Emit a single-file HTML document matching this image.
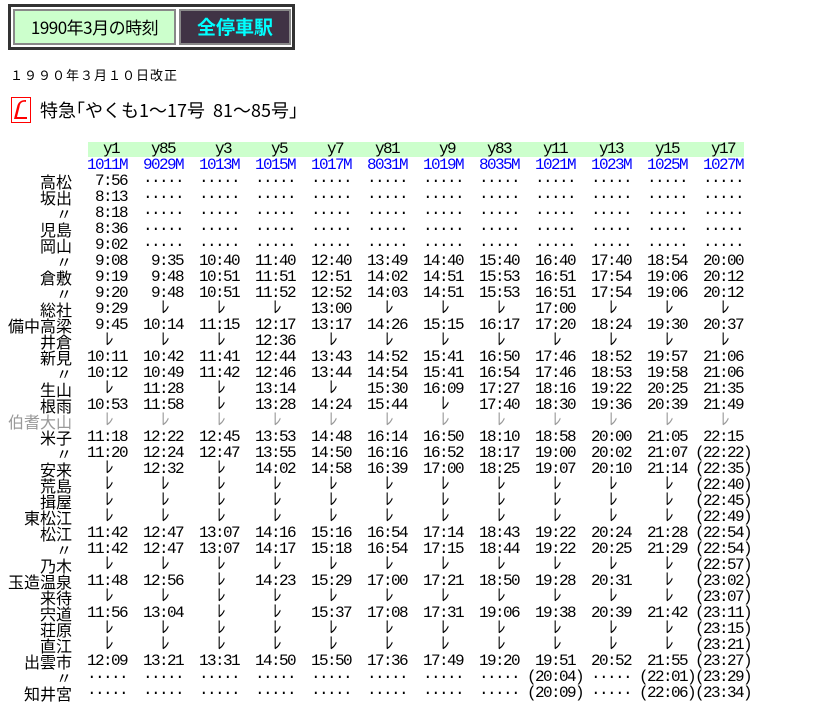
<!DOCTYPE html>
<html><head><meta charset="utf-8"><style>
body{margin:0;background:#fff;width:820px;height:707px;overflow:hidden;position:relative;font-family:"Liberation Sans","Noto Sans CJK JP",sans-serif;color:#000}
.top{position:absolute;left:8px;top:4px;width:281px;height:40px;border:3px solid #333;background:#fff}
.b1{position:absolute;left:2px;top:2px;width:159px;height:32px;background:#ccffcc;border:2px solid #888;font-size:17px;line-height:32px;text-align:center;font-family:"Noto Sans CJK JP",sans-serif;letter-spacing:-0.5px}
.b2{position:absolute;left:168px;top:2px;width:108px;height:32px;background:#403345;border:2px solid #888;font-size:19px;line-height:32px;text-align:center;color:#00ffff;font-family:"Noto Sans CJK JP",sans-serif;font-weight:bold}
.date{position:absolute;left:10px;top:65px;font-size:13px;letter-spacing:1px;font-family:"Noto Sans CJK JP",sans-serif}
.ico{position:absolute;left:11px;top:97px;width:18px;height:24px;border:1px solid #f00}
.ttl{position:absolute;left:40px;top:98px;font-size:18px;line-height:24px;font-family:"Noto Sans CJK JP",sans-serif}
.g{position:absolute;left:88px;top:142px;width:656px;height:15px;background:#ccffcc}
.t{position:absolute;left:0;top:141px;width:820px}
.r{height:16px;position:relative;display:flex;align-items:flex-start;overflow:visible}
.r u{position:absolute;right:748px;top:0;text-decoration:none;font-size:16px;font-family:"Noto Sans CJK JP",sans-serif;line-height:16px}
.r i{display:block;flex:none;width:56px;height:16px;font-style:normal;font-family:"Liberation Mono",monospace;font-size:16px;line-height:16px;letter-spacing:-1.6px;white-space:pre;overflow:visible}
.c{padding-left:87px}
.r i.k{font-family:"Noto Sans CJK JP",sans-serif;letter-spacing:0;padding-left:18px;width:38px;position:relative;top:-3px;font-size:17px}
.r i.p{margin-left:-8px;margin-right:8px}
.bl i{color:#0000ff}
.gr,.gr i{color:#999}
</style></head><body>
<div class="top"><div class="b1">1990年3月の時刻</div><div class="b2">全停車駅</div></div>
<div class="date">１９９０年３月１０日改正</div>
<div class="ico"><svg width="18" height="24" viewBox="0 0 18 24"><path d="M14 4 C9 3 8 6 7.5 9 L5 19 L15 19 L15 21 L2 21 L5 9 C6 4 9 2 14 2 Z" fill="#f00"/></svg></div>
<div class="ttl">特急｢やくも1～17号&nbsp; 81～85号｣</div>
<div class="g"></div>
<div class="t">
<div class="r c"><i>  y1 </i><i> y85 </i><i>  y3 </i><i>  y5 </i><i>  y7 </i><i> y81 </i><i>  y9 </i><i> y83 </i><i> y11 </i><i> y13 </i><i> y15 </i><i> y17 </i></div>
<div class="r c bl"><i>1011M</i><i>9029M</i><i>1013M</i><i>1015M</i><i>1017M</i><i>8031M</i><i>1019M</i><i>8035M</i><i>1021M</i><i>1023M</i><i>1025M</i><i>1027M</i></div>
<div class="r c"><u>高松</u><i> 7:56</i><i>·····</i><i>·····</i><i>·····</i><i>·····</i><i>·····</i><i>·····</i><i>·····</i><i>·····</i><i>·····</i><i>·····</i><i>·····</i></div>
<div class="r c"><u>坂出</u><i> 8:13</i><i>·····</i><i>·····</i><i>·····</i><i>·····</i><i>·····</i><i>·····</i><i>·····</i><i>·····</i><i>·····</i><i>·····</i><i>·····</i></div>
<div class="r c"><u>〃</u><i> 8:18</i><i>·····</i><i>·····</i><i>·····</i><i>·····</i><i>·····</i><i>·····</i><i>·····</i><i>·····</i><i>·····</i><i>·····</i><i>·····</i></div>
<div class="r c"><u>児島</u><i> 8:36</i><i>·····</i><i>·····</i><i>·····</i><i>·····</i><i>·····</i><i>·····</i><i>·····</i><i>·····</i><i>·····</i><i>·····</i><i>·····</i></div>
<div class="r c"><u>岡山</u><i> 9:02</i><i>·····</i><i>·····</i><i>·····</i><i>·····</i><i>·····</i><i>·····</i><i>·····</i><i>·····</i><i>·····</i><i>·····</i><i>·····</i></div>
<div class="r c"><u>〃</u><i> 9:08</i><i> 9:35</i><i>10:40</i><i>11:40</i><i>12:40</i><i>13:49</i><i>14:40</i><i>15:40</i><i>16:40</i><i>17:40</i><i>18:54</i><i>20:00</i></div>
<div class="r c"><u>倉敷</u><i> 9:19</i><i> 9:48</i><i>10:51</i><i>11:51</i><i>12:51</i><i>14:02</i><i>14:51</i><i>15:53</i><i>16:51</i><i>17:54</i><i>19:06</i><i>20:12</i></div>
<div class="r c"><u>〃</u><i> 9:20</i><i> 9:48</i><i>10:51</i><i>11:52</i><i>12:52</i><i>14:03</i><i>14:51</i><i>15:53</i><i>16:51</i><i>17:54</i><i>19:06</i><i>20:12</i></div>
<div class="r c"><u>総社</u><i> 9:29</i><i class="k">ﾚ</i><i class="k">ﾚ</i><i class="k">ﾚ</i><i>13:00</i><i class="k">ﾚ</i><i class="k">ﾚ</i><i class="k">ﾚ</i><i>17:00</i><i class="k">ﾚ</i><i class="k">ﾚ</i><i class="k">ﾚ</i></div>
<div class="r c"><u>備中高梁</u><i> 9:45</i><i>10:14</i><i>11:15</i><i>12:17</i><i>13:17</i><i>14:26</i><i>15:15</i><i>16:17</i><i>17:20</i><i>18:24</i><i>19:30</i><i>20:37</i></div>
<div class="r c"><u>井倉</u><i class="k">ﾚ</i><i class="k">ﾚ</i><i class="k">ﾚ</i><i>12:36</i><i class="k">ﾚ</i><i class="k">ﾚ</i><i class="k">ﾚ</i><i class="k">ﾚ</i><i class="k">ﾚ</i><i class="k">ﾚ</i><i class="k">ﾚ</i><i class="k">ﾚ</i></div>
<div class="r c"><u>新見</u><i>10:11</i><i>10:42</i><i>11:41</i><i>12:44</i><i>13:43</i><i>14:52</i><i>15:41</i><i>16:50</i><i>17:46</i><i>18:52</i><i>19:57</i><i>21:06</i></div>
<div class="r c"><u>〃</u><i>10:12</i><i>10:49</i><i>11:42</i><i>12:46</i><i>13:44</i><i>14:54</i><i>15:41</i><i>16:54</i><i>17:46</i><i>18:53</i><i>19:58</i><i>21:06</i></div>
<div class="r c"><u>生山</u><i class="k">ﾚ</i><i>11:28</i><i class="k">ﾚ</i><i>13:14</i><i class="k">ﾚ</i><i>15:30</i><i>16:09</i><i>17:27</i><i>18:16</i><i>19:22</i><i>20:25</i><i>21:35</i></div>
<div class="r c"><u>根雨</u><i>10:53</i><i>11:58</i><i class="k">ﾚ</i><i>13:28</i><i>14:24</i><i>15:44</i><i class="k">ﾚ</i><i>17:40</i><i>18:30</i><i>19:36</i><i>20:39</i><i>21:49</i></div>
<div class="r c gr"><u>伯耆大山</u><i class="k">ﾚ</i><i class="k">ﾚ</i><i class="k">ﾚ</i><i class="k">ﾚ</i><i class="k">ﾚ</i><i class="k">ﾚ</i><i class="k">ﾚ</i><i class="k">ﾚ</i><i class="k">ﾚ</i><i class="k">ﾚ</i><i class="k">ﾚ</i><i class="k">ﾚ</i></div>
<div class="r c"><u>米子</u><i>11:18</i><i>12:22</i><i>12:45</i><i>13:53</i><i>14:48</i><i>16:14</i><i>16:50</i><i>18:10</i><i>18:58</i><i>20:00</i><i>21:05</i><i>22:15</i></div>
<div class="r c"><u>〃</u><i>11:20</i><i>12:24</i><i>12:47</i><i>13:55</i><i>14:50</i><i>16:16</i><i>16:52</i><i>18:17</i><i>19:00</i><i>20:02</i><i>21:07</i><i class="p">(22:22)</i></div>
<div class="r c"><u>安来</u><i class="k">ﾚ</i><i>12:32</i><i class="k">ﾚ</i><i>14:02</i><i>14:58</i><i>16:39</i><i>17:00</i><i>18:25</i><i>19:07</i><i>20:10</i><i>21:14</i><i class="p">(22:35)</i></div>
<div class="r c"><u>荒島</u><i class="k">ﾚ</i><i class="k">ﾚ</i><i class="k">ﾚ</i><i class="k">ﾚ</i><i class="k">ﾚ</i><i class="k">ﾚ</i><i class="k">ﾚ</i><i class="k">ﾚ</i><i class="k">ﾚ</i><i class="k">ﾚ</i><i class="k">ﾚ</i><i class="p">(22:40)</i></div>
<div class="r c"><u>揖屋</u><i class="k">ﾚ</i><i class="k">ﾚ</i><i class="k">ﾚ</i><i class="k">ﾚ</i><i class="k">ﾚ</i><i class="k">ﾚ</i><i class="k">ﾚ</i><i class="k">ﾚ</i><i class="k">ﾚ</i><i class="k">ﾚ</i><i class="k">ﾚ</i><i class="p">(22:45)</i></div>
<div class="r c"><u>東松江</u><i class="k">ﾚ</i><i class="k">ﾚ</i><i class="k">ﾚ</i><i class="k">ﾚ</i><i class="k">ﾚ</i><i class="k">ﾚ</i><i class="k">ﾚ</i><i class="k">ﾚ</i><i class="k">ﾚ</i><i class="k">ﾚ</i><i class="k">ﾚ</i><i class="p">(22:49)</i></div>
<div class="r c"><u>松江</u><i>11:42</i><i>12:47</i><i>13:07</i><i>14:16</i><i>15:16</i><i>16:54</i><i>17:14</i><i>18:43</i><i>19:22</i><i>20:24</i><i>21:28</i><i class="p">(22:54)</i></div>
<div class="r c"><u>〃</u><i>11:42</i><i>12:47</i><i>13:07</i><i>14:17</i><i>15:18</i><i>16:54</i><i>17:15</i><i>18:44</i><i>19:22</i><i>20:25</i><i>21:29</i><i class="p">(22:54)</i></div>
<div class="r c"><u>乃木</u><i class="k">ﾚ</i><i class="k">ﾚ</i><i class="k">ﾚ</i><i class="k">ﾚ</i><i class="k">ﾚ</i><i class="k">ﾚ</i><i class="k">ﾚ</i><i class="k">ﾚ</i><i class="k">ﾚ</i><i class="k">ﾚ</i><i class="k">ﾚ</i><i class="p">(22:57)</i></div>
<div class="r c"><u>玉造温泉</u><i>11:48</i><i>12:56</i><i class="k">ﾚ</i><i>14:23</i><i>15:29</i><i>17:00</i><i>17:21</i><i>18:50</i><i>19:28</i><i>20:31</i><i class="k">ﾚ</i><i class="p">(23:02)</i></div>
<div class="r c"><u>来待</u><i class="k">ﾚ</i><i class="k">ﾚ</i><i class="k">ﾚ</i><i class="k">ﾚ</i><i class="k">ﾚ</i><i class="k">ﾚ</i><i class="k">ﾚ</i><i class="k">ﾚ</i><i class="k">ﾚ</i><i class="k">ﾚ</i><i class="k">ﾚ</i><i class="p">(23:07)</i></div>
<div class="r c"><u>宍道</u><i>11:56</i><i>13:04</i><i class="k">ﾚ</i><i class="k">ﾚ</i><i>15:37</i><i>17:08</i><i>17:31</i><i>19:06</i><i>19:38</i><i>20:39</i><i>21:42</i><i class="p">(23:11)</i></div>
<div class="r c"><u>荘原</u><i class="k">ﾚ</i><i class="k">ﾚ</i><i class="k">ﾚ</i><i class="k">ﾚ</i><i class="k">ﾚ</i><i class="k">ﾚ</i><i class="k">ﾚ</i><i class="k">ﾚ</i><i class="k">ﾚ</i><i class="k">ﾚ</i><i class="k">ﾚ</i><i class="p">(23:15)</i></div>
<div class="r c"><u>直江</u><i class="k">ﾚ</i><i class="k">ﾚ</i><i class="k">ﾚ</i><i class="k">ﾚ</i><i class="k">ﾚ</i><i class="k">ﾚ</i><i class="k">ﾚ</i><i class="k">ﾚ</i><i class="k">ﾚ</i><i class="k">ﾚ</i><i class="k">ﾚ</i><i class="p">(23:21)</i></div>
<div class="r c"><u>出雲市</u><i>12:09</i><i>13:21</i><i>13:31</i><i>14:50</i><i>15:50</i><i>17:36</i><i>17:49</i><i>19:20</i><i>19:51</i><i>20:52</i><i>21:55</i><i class="p">(23:27)</i></div>
<div class="r c"><u>〃</u><i>·····</i><i>·····</i><i>·····</i><i>·····</i><i>·····</i><i>·····</i><i>·····</i><i>·····</i><i class="p">(20:04)</i><i>·····</i><i class="p">(22:01)</i><i class="p">(23:29)</i></div>
<div class="r c"><u>知井宮</u><i>·····</i><i>·····</i><i>·····</i><i>·····</i><i>·····</i><i>·····</i><i>·····</i><i>·····</i><i class="p">(20:09)</i><i>·····</i><i class="p">(22:06)</i><i class="p">(23:34)</i></div>
</div>
</body></html>
